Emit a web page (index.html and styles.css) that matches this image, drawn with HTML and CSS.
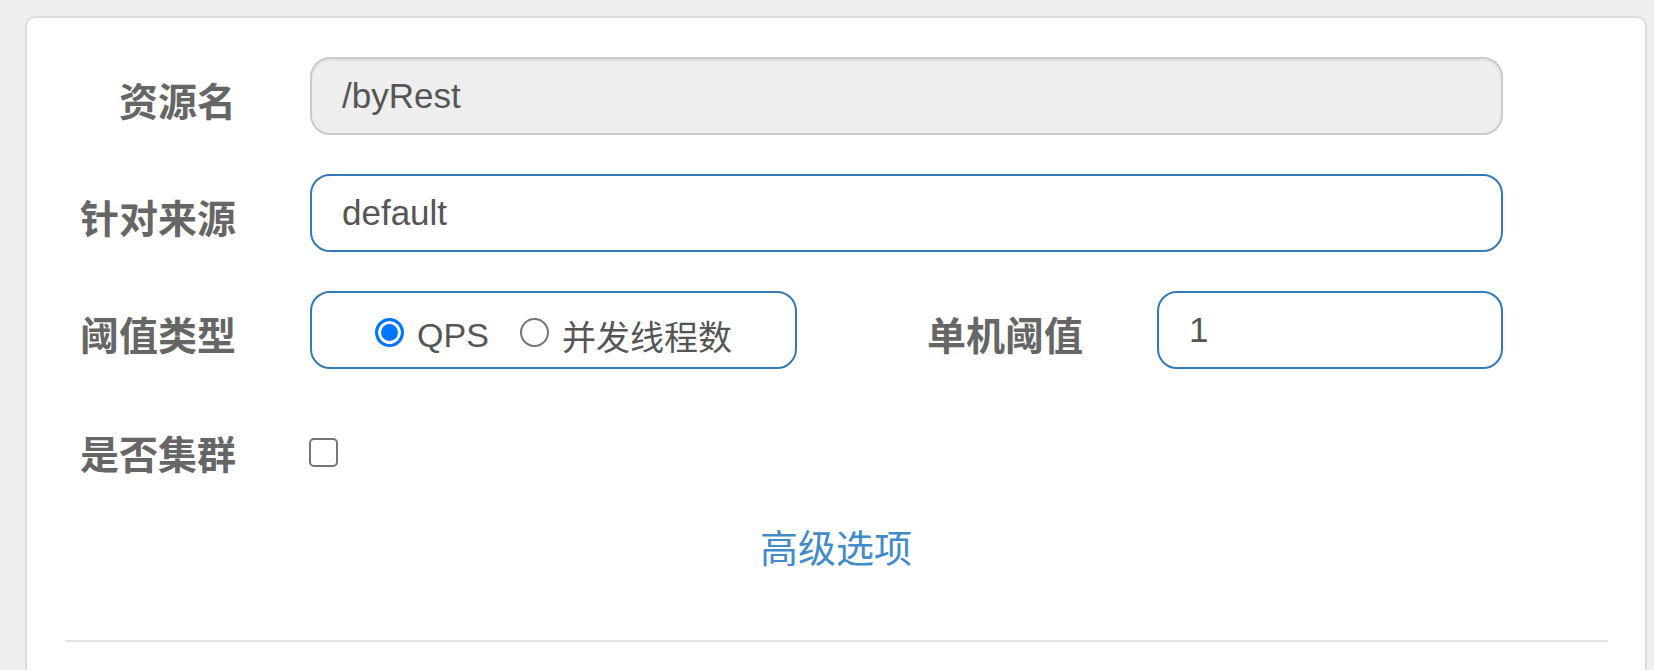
FILE: index.html
```html
<!DOCTYPE html>
<html lang="zh-CN">
<head>
<meta charset="utf-8">
<title>流控规则</title>
<link rel="stylesheet" href="styles.css">
</head>
<body>
<div class="card">
  <form class="form">
    <div class="form-row">
      <label class="label">资源名</label>
      <input class="control control-wide" type="text" value="/byRest" disabled>
    </div>
    <div class="form-row">
      <label class="label">针对来源</label>
      <input class="control control-wide" type="text" value="default">
    </div>
    <div class="form-row">
      <label class="label">阈值类型</label>
      <div class="control radio-group">
        <label class="radio"><input type="radio" name="grade" checked><span>QPS</span></label>
        <label class="radio"><input type="radio" name="grade"><span>并发线程数</span></label>
      </div>
      <label class="label label-mid">单机阈值</label>
      <input class="control control-narrow" type="text" value="1">
    </div>
    <div class="form-row form-row-check">
      <label class="label">是否集群</label>
      <input class="checkbox" type="checkbox">
    </div>
    <div class="advanced"><a href="#">高级选项</a></div>
    <hr class="divider">
  </form>
</div>
</body>
</html>
```

FILE: styles.css
```css
html, body {
  margin: 0;
  padding: 0;
  background: #efefef;
  overflow: hidden;
  height: 100%;
  font-family: "Liberation Sans", "Noto Sans CJK SC", sans-serif;
}

.card {
  margin: 16px 7px 0 25px;
  height: calc(100vh - 16px);
  background: #fff;
  border: 2px solid #dcdcdc;
  border-bottom: 0;
  border-radius: 10px 10px 0 0;
  padding-top: 39px;
  box-sizing: border-box;
  overflow: hidden;
}

.form {
  margin: 0;
}

.form-row {
  display: flex;
  align-items: flex-start;
  height: 78px;
  margin-bottom: 39px;
}

.label {
  flex: none;
  width: 209px;
  margin-right: 74px;
  text-align: right;
  font-family: "Noto Sans CJK SC", sans-serif;
  font-weight: 700;
  font-size: 39px;
  line-height: 78px;
  padding-top: 3px;
  color: #666;
}

.label-mid {
  width: 286px;
  margin-right: 74px;
}

.control {
  flex: none;
  box-sizing: border-box;
  height: 78px;
  margin: 0;
  border: 2px solid #337ab7;
  border-radius: 20px;
  padding: 0 30px;
  background: #fff;
  font-family: "Liberation Sans", "Noto Sans CJK SC", sans-serif;
  font-size: 35px;
  color: #555;
  outline: none;
}

.control:disabled {
  background: #eee;
  border-color: #cbcbcb;
  box-shadow: inset 0 2px 2px rgba(0, 0, 0, 0.06);
  color: #555;
  -webkit-text-fill-color: #555;
  opacity: 1;
}

.control-wide {
  width: 1193px;
}

.control-narrow {
  width: 346px;
}

.radio-group {
  width: 487px;
  display: flex;
  align-items: center;
  justify-content: center;
  gap: 31px;
  padding: 4px 0 0;
}

.radio {
  display: flex;
  align-items: center;
  font-size: 34px;
  color: #555;
  cursor: pointer;
}

.radio span {
  position: relative;
  top: 3px;
}

.radio input {
  -webkit-appearance: none;
  appearance: none;
  box-sizing: border-box;
  width: 29px;
  height: 29px;
  margin: 0 13px 0 0;
  border: 2px solid #767676;
  border-radius: 50%;
  background: #fff;
}

.radio input:checked {
  border: 3px solid #0075ff;
  background: #0075ff;
  box-shadow: inset 0 0 0 3px #fff;
}

.form-row-check {
  align-items: center;
  margin-top: 42px;
}

.checkbox {
  -webkit-appearance: none;
  appearance: none;
  box-sizing: border-box;
  width: 29px;
  height: 29px;
  margin: 5px 0 0 -1px;
  border: 2px solid #767676;
  border-radius: 5px;
  background: #fff;
}

.advanced {
  margin-top: -9px;
  text-align: center;
  font-family: "Noto Sans CJK SC", sans-serif;
  font-size: 38px;
  line-height: 54px;
}

.advanced a {
  color: #428bca;
  text-decoration: none;
}

.divider {
  margin: 67px 37px 0 38px;
  border: 0;
  border-top: 2px solid #e3e3e3;
  height: 0;
}
```
